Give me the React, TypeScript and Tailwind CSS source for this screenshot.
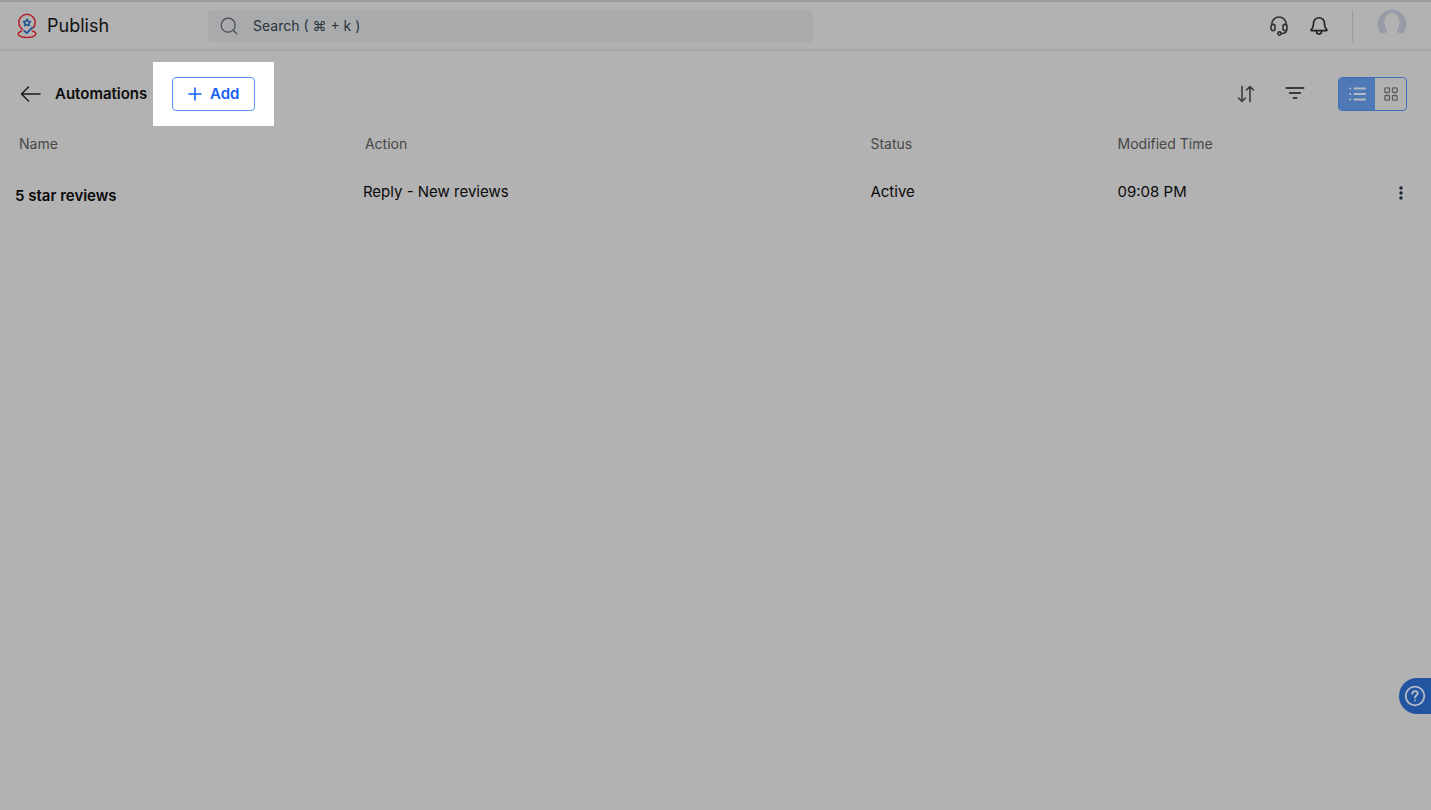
import {ReactNode} from "react";

type Automation = {
    name: string;
    action: string;
    status: string;
    modified: string;
}

const automations: Automation[] = [
    {name: "5 star reviews", action: "Reply - New reviews", status: "Active", modified: "09:08 PM"},
];

function Icon({className, viewBox, strokeWidth = 1.6, children}: {
    className: string,
    viewBox: string,
    strokeWidth?: number,
    children: ReactNode
}) {
    return (
        <svg className={className} viewBox={viewBox} fill="none" stroke="currentColor" strokeWidth={strokeWidth}
             strokeLinecap="round" strokeLinejoin="round" aria-hidden="true">
            {children}
        </svg>
    )
}

function Logo() {
    return (
        <svg className="w-5 h-[26px]" viewBox="0 0 20 26" fill="none" strokeLinecap="round" strokeLinejoin="round" aria-hidden="true">
            <path d="M5.6 16.6C3.4 14.8 1.9 12.4 1.9 9.4a8.1 8.1 0 0 1 16.2 0c0 2.2-.8 4-1.8 5.4" stroke="#b3202a" strokeWidth="1.5"/>
            <path d="M4.3 18.3C2.4 18.9 1.2 19.9 1.2 21c0 2 3.9 3.5 8.8 3.5s8.8-1.5 8.8-3.5c0-1.3-1.4-2.4-3.5-3" stroke="#b3202a" strokeWidth="1.5"/>
            <path d="M10 6.2l1.1 2.1 2.4.4-1.7 1.7.4 2.4L10 11.7l-2.2 1.1.4-2.4-1.7-1.7 2.4-.4z" stroke="#1f5290" strokeWidth="1.5"/>
            <path d="M7.2 17.8l2.6 2.4 5.4-5.6" stroke="#1f5290" strokeWidth="1.7"/>
        </svg>
    )
}

function Header() {
    return (
        <header className="flex items-center h-[51px] border-t-2 border-t-[#9b9b9b] border-b-2 border-b-[#a5a5ab]">
            <a href="#" className="flex items-center gap-2.5 w-[208px] pl-[17px] text-[18px] leading-6 text-[#111]">
                <Logo/>
                Publish
            </a>
            <label className="flex items-center gap-[15px] w-[605px] h-8 pl-3 rounded bg-[#a8aaab] text-[#2b333c]">
                <Icon className="size-[18px] text-[#4a4d52]" viewBox="0 0 18 18" strokeWidth={1.3}>
                    <circle cx="8.2" cy="8.2" r="7"/>
                    <path d="M13.2 13.2l3.6 3.6"/>
                </Icon>
                <input type="text" aria-label="Search" placeholder="Search ( ⌘ + k )"
                       className="flex-1 bg-transparent outline-none text-[14px] placeholder:text-[#2b333c]"/>
            </label>
            <div className="flex items-center ml-auto pr-6">
                <button type="button" aria-label="Support" className="text-[#333]">
                    <Icon className="w-[18px] h-5" viewBox="0 0 18 20">
                        <path d="M1.8 9V8.2a7.2 7.2 0 0 1 14.4 0V9"/>
                        <rect x="1" y="8.4" width="4" height="6.2" rx="2"/>
                        <rect x="13" y="8.4" width="4" height="6.2" rx="2"/>
                        <path d="M16.6 13.8c0 2.4-2 3.8-5.3 3.8"/>
                        <circle cx="9.4" cy="17.5" r="1.6"/>
                    </Icon>
                </button>
                <button type="button" aria-label="Notifications" className="ml-[22px] text-[#222]">
                    <Icon className="w-[18px] h-5" viewBox="0 0 18 20">
                        <path d="M3.5 7.2a5.5 5.5 0 0 1 11 0c0 3.6.8 5.1 2.2 6.3.6.5.3 1.1-.4 1.1H1.7c-.7 0-1-.6-.4-1.1 1.4-1.2 2.2-2.7 2.2-6.3z"/>
                        <path d="M6.5 15.6a2.5 2.5 0 0 0 5 0"/>
                    </Icon>
                </button>
                <div className="w-px h-8 ml-6 bg-[#9c9c9f]"/>
                <button type="button" aria-label="Profile" className="ml-6 pb-2">
                    <svg className="w-[30px] h-[26px]" viewBox="0 0 30 26" aria-hidden="true">
                        <path fill="#979ca8" d="M4.800 25C2.200 22.400.6 19 .6 15.200A14.400 14.400 0 0 1 15 .8a14.400 14.400 0 0 1 14.400 14.400c0 3.800-1.600 7.200-4.200 9.800-1.400-.8-2.700-1-3.900-1.300-1.500-.4-1.700-1.800-.8-3.200 1.300-2.200 2-4.200 2-7.100 0-5.300-3-9.400-7.500-9.400s-7.500 4.100-7.500 9.400c0 2.900.7 4.900 2 7.100.9 1.400.7 2.800-.8 3.200-1.200.3-2.500.5-3.900 1.300z"/>
                    </svg>
                </button>
            </div>
        </header>
    )
}

function Toolbar() {
    return (
        <div className="flex items-center h-[86px] pr-6">
            <button type="button" aria-label="Back" className="ml-5 text-[#1c1c1c]">
                <Icon className="w-[21px] h-4" viewBox="0 0 21 16" strokeWidth={1.5}>
                    <path d="M20 8H1.5M8.5 1l-7 7 7 7"/>
                </Icon>
            </button>
            <h1 className="ml-[14px] w-[98px] text-[15px] leading-5 font-semibold text-[#0c0c0c]">Automations</h1>
            <div className="flex items-center h-16 px-[19px] bg-white">
                <button type="button" className="flex items-center gap-2 h-[34px] px-[15px] rounded border border-[#5c97fb] text-[#1560f5] text-[15px] leading-5 font-semibold">
                    <Icon className="size-[14px]" viewBox="0 0 14 14">
                        <path d="M7 1v12M1 7h12"/>
                    </Icon>
                    Add
                </button>
            </div>
            <div className="flex items-center ml-auto">
                <button type="button" aria-label="Sort" className="text-[#3c3c3c]">
                    <Icon className="w-[18px] h-[18px]" viewBox="0 0 18 18">
                        <path d="M5 1.5v15M1.5 13L5 16.5 8.5 13M13 16.5v-15M9.5 5L13 1.5 16.5 5"/>
                    </Icon>
                </button>
                <button type="button" aria-label="Filter" className="ml-[30px] text-[#3c3c3c]">
                    <Icon className="w-5 h-4" viewBox="0 0 20 16" strokeWidth={2}>
                        <path d="M1.5 2h17M4.8 7h10.4M8.5 12h3"/>
                    </Icon>
                </button>
                <div className="flex h-[34px] ml-[33px] rounded border border-[#3f70b8] overflow-hidden">
                    <button type="button" aria-label="List view" className="flex items-center justify-center w-9 bg-[#4e78b6] text-[#b5b9c0]">
                        <Icon className="w-[17px] h-4" viewBox="0 0 17 16" strokeWidth={2}>
                            <path d="M5.5 2.5h10.5M5.5 8h10.5M5.5 13.5h10.5M1.2 2.5h.1M1.2 8h.1M1.2 13.5h.1"/>
                        </Icon>
                    </button>
                    <button type="button" aria-label="Grid view" className="flex items-center justify-center w-[31px] text-[#5e5e5e]">
                        <Icon className="size-[14px]" viewBox="0 0 14 14" strokeWidth={1.3}>
                            <rect x=".8" y=".8" width="4.7" height="4.7" rx="1"/>
                            <rect x="8.5" y=".8" width="4.7" height="4.7" rx="1"/>
                            <rect x=".8" y="8.5" width="4.7" height="4.7" rx="1"/>
                            <rect x="8.5" y="8.5" width="4.7" height="4.7" rx="1"/>
                        </Icon>
                    </button>
                </div>
            </div>
        </div>
    )
}

function AutomationTable() {
    return (
        <div className="-mt-px pl-[3px] pr-4">
            <table className="w-full table-fixed text-left">
                <thead>
                    <tr className="h-7 align-top border-b border-[#adadad] text-[14px] leading-4 text-[#474747]">
                        <th className="w-[24.5%] pl-4 font-normal">Name</th>
                        <th className="w-[35.8%] pl-4 font-normal">Action</th>
                        <th className="w-[17.5%] pl-4 font-normal">Status</th>
                        <th className="pl-4 font-normal">Modified Time</th>
                        <th className="w-7" aria-label="Options"/>
                    </tr>
                </thead>
                <tbody>
                    {automations.map((item) => (
                        <tr key={item.name} className="align-top text-[15px] leading-5 text-[#0a0a0a]">
                            <td className="pl-3 pt-[21px] font-semibold">{item.name}</td>
                            <td className="pl-[14px] pt-[17px]">{item.action}</td>
                            <td className="pl-4 pt-[17px]">{item.status}</td>
                            <td className="pl-4 pt-[17px]">{item.modified}</td>
                            <td className="pt-5">
                                <button type="button" aria-label="More options" className="block mx-auto text-[#1c2536]">
                                    <svg className="w-1 h-4" viewBox="0 0 4 16" fill="currentColor" aria-hidden="true">
                                        <circle cx="2" cy="3" r="1.7"/>
                                        <circle cx="2" cy="8" r="1.7"/>
                                        <circle cx="2" cy="13" r="1.7"/>
                                    </svg>
                                </button>
                            </td>
                        </tr>
                    ))}
                </tbody>
            </table>
        </div>
    )
}

function App() {
    return (
        <div className="min-h-screen bg-[#b2b2b2] font-['Inter','Liberation_Sans',sans-serif]">
            <Header/>
            <main>
                <Toolbar/>
                <AutomationTable/>
            </main>
            <button type="button" aria-label="Help" className="fixed right-0 bottom-24 flex items-center w-8 h-9 pl-[5px] rounded-l-full bg-[#2354a0] text-[#b4bccb]">
                <Icon className="size-[22px]" viewBox="0 0 22 22" strokeWidth={1.8}>
                    <circle cx="11" cy="11" r="9.3"/>
                    <path d="M8.3 8.8c0-1.6 1.1-2.6 2.7-2.6s2.7 1 2.7 2.4c0 1.9-2.7 2-2.7 3.9M11 15.5v.1"/>
                </Icon>
            </button>
        </div>
    )
}

export default App
